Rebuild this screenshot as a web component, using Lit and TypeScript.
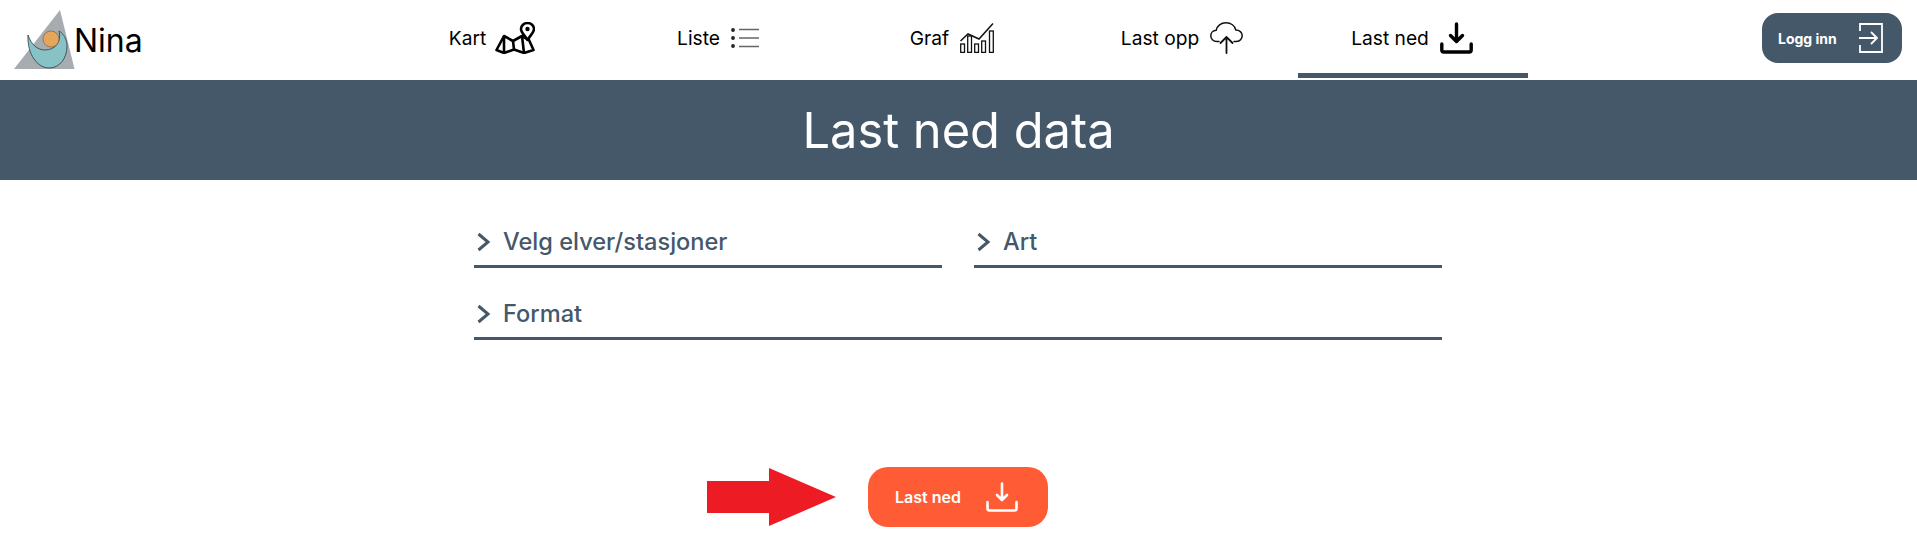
import { LitElement, html, css, svg } from 'lit';
import { customElement } from 'lit/decorators.js';

const icons = {
  kart: svg`<svg class="tuck" width="40" height="32" viewBox="0 0 40 32" fill="none" stroke="#000" stroke-width="2.6" stroke-linejoin="round">
    <path d="M1.500 28 L9 14 L18 19 L27 14 L34 18 L38.500 28 L29 31 L19 27.500 L9 31 Z"/>
    <path d="M9 14 L9 31 M18 19 L19 27.500 M27 14 L29 31"/>
    <path d="M32.500 18 C29.500 13 26 10.500 26 7 A6.500 6 0 0 1 39 7 C39 10.500 35.500 13 32.500 18 Z" fill="#fff"/>
    <circle cx="32.500" cy="7" r="2.200" fill="#000" stroke="none"/></svg>`,
  liste: svg`<svg class="shift" width="28" height="20" viewBox="0 0 28 20" fill="none">
    <circle cx="2" cy="2" r="1.900" fill="#222"/><circle cx="2" cy="10" r="1.900" fill="#222"/><circle cx="2" cy="18" r="1.900" fill="#222"/>
    <path d="M8 1.500H28M8 10H28M8 18.500H28" stroke="#666" stroke-width="1.600"/></svg>`,
  graf: svg`<svg width="34" height="30" viewBox="0 0 34 30" fill="none" stroke="#111" stroke-width="1.300">
    <path d="M0.500 18 L8 11 L19 16 L33 0.500" stroke-width="1.500"/>
    <rect x="0.700" y="21" width="3.800" height="8.400"/><rect x="7.700" y="13" width="3.800" height="16.400"/>
    <rect x="14.700" y="21" width="3.800" height="8.400"/><rect x="21.700" y="18" width="3.800" height="11.400"/>
    <rect x="29.500" y="8" width="3.800" height="21.400"/></svg>`,
  cloud: svg`<svg width="33" height="32" viewBox="0 0 33 32" fill="none" stroke="#111" stroke-width="1.500" stroke-linecap="round" stroke-linejoin="round">
    <path d="M9 19.500 H7 C3 19.500 0.800 16.800 0.800 13.800 C0.800 10.800 3 8.500 6.200 8.300 C7 3.800 11 0.800 16 0.800 C21 0.800 24.800 3.800 25.800 8 C29.500 8 32.200 10.500 32.200 13.800 C32.200 16.800 29.800 19.500 26.500 19.500 H24"/>
    <path d="M16.500 31 V15.500 M10.500 21 L16.500 15 L22.500 21" stroke-width="1.800"/></svg>`,
  download: svg`<svg width="33" height="32" viewBox="0 0 33 32" fill="none" stroke="#000" stroke-width="3.400" stroke-linecap="round" stroke-linejoin="round">
    <path d="M16.500 2 V19.500 M10.500 13.500 L16.500 19.500 L22.500 13.500"/>
    <path d="M1.800 22 V28 Q1.800 30 3.800 30 H29.200 Q31.200 30 31.200 28 V22"/></svg>`,
  login: svg`<svg width="24" height="30" viewBox="0 0 24 30" fill="none" stroke="#fff" stroke-width="1.800">
    <path d="M1 8 V1 H23 V29 H1 V22"/><path d="M0 15 H18 M12 9 L18 15 L12 21"/></svg>`,
  chevron: svg`<svg width="16" height="20" viewBox="0 0 16 20" fill="none" stroke="#45586a" stroke-width="3">
    <path d="M2.500 2 L12 10 L2.500 18"/></svg>`,
};

@customElement('app-root')
export class AppRoot extends LitElement {
  static styles = css`
    :host {
      display: block;
      font-family: Inter, "Liberation Sans", sans-serif;
      color: #000;
      background: #fff;
      height: 547px;
      overflow: hidden;
    }
    .header {
      display: flex;
      height: 80px;
    }
    .brand {
      width: 378px;
      flex: none;
      display: flex;
      align-items: center;
      padding-left: 14px;
      box-sizing: border-box;
      font-size: 32px;
    }
    .brand span {
      margin: 1px 0 0 -1px;
    }
    .nav {
      display: grid;
      grid-template-columns: repeat(5, 230px);
      height: 78px;
    }
    .tab {
      display: flex;
      align-items: center;
      justify-content: center;
      gap: 11px;
      padding-right: 2px;
      font-size: 19.2px;
      font-weight: 400;
      border-bottom: 5px solid transparent;
    }
    .tab span {
      margin-top: 2px;
    }
    .tab svg {
      margin-top: 2px;
    }
    .tab .shift {
      margin-right: 8px;
    }
    .tab .tuck {
      margin-left: -2px;
    }
    .tab.active {
      border-bottom-color: #45586a;
    }
    .login {
      margin: 13px 15px 0 auto;
      width: 140px;
      height: 50px;
      box-sizing: border-box;
      padding: 0 19px 0 16px;
      display: flex;
      align-items: center;
      justify-content: space-between;
      background: #45586a;
      border-radius: 16px;
      color: #fff;
      font-size: 14px;
      font-weight: 700;
    }
    .band {
      height: 100px;
      background: #45586a;
      color: #fff;
      display: flex;
      align-items: center;
      justify-content: center;
      font-size: 48.8px;
      font-weight: 400;
    }
    .form {
      width: 968px;
      margin-left: 474px;
      padding: 47px 0 0;
      display: grid;
      grid-template-columns: 1fr 1fr;
      column-gap: 32px;
      row-gap: 31px;
    }
    .field {
      height: 38px;
      border-bottom: 3px solid #45586a;
      display: flex;
      align-items: flex-start;
      gap: 11px;
      padding-left: 2px;
      color: #45586a;
      font-size: 23.6px;
      font-weight: 500;
      line-height: 29px;
    }
    .field svg {
      margin-top: 5px;
    }
    .field.wide {
      grid-column: 1 / -1;
    }
    .actions {
      display: flex;
      align-items: center;
      padding: 127px 0 0 707px;
      gap: 32px;
    }
    .go {
      width: 180px;
      height: 60px;
      box-sizing: border-box;
      padding: 0 30px 0 27px;
      display: flex;
      align-items: center;
      justify-content: space-between;
      border-radius: 20px;
      background: #ff5c36;
      color: #fff;
      font-size: 16px;
      font-weight: 600;
    }
  `;

  tab(label: string, icon: unknown, active = false) {
    return html`<div class="tab ${active ? 'active' : ''}"><span>${label}</span>${icon}</div>`;
  }

  render() {
    return html`
      <div class="header">
        <div class="brand">
          <svg width="61" height="60" viewBox="0 0 61 60">
            <path d="M46 0 L60.500 59 L0 59 Z" fill="#a7acb0"/>
            <path d="M14 25 C13 45 24 58 35 58 C46 58 53 48 53 36 C53 30 50 24 45 21 C48 32 41 40 31 40 C23 40 17 34 14 25 Z" fill="#86c2c6" stroke="#3c4a4e" stroke-width="0.900"/>
            <circle cx="37" cy="29" r="8" fill="#e5a55a" stroke="#6b5a3c" stroke-width="0.600"/>
          </svg>
          <span>Nina</span>
        </div>
        <nav class="nav">
          ${this.tab('Kart', icons.kart)}
          ${this.tab('Liste', icons.liste)}
          ${this.tab('Graf', icons.graf)}
          ${this.tab('Last opp', icons.cloud)}
          ${this.tab('Last ned', icons.download, true)}
        </nav>
        <div class="login"><span>Logg inn</span>${icons.login}</div>
      </div>
      <div class="band">Last ned data</div>
      <div class="form">
        <div class="field">${icons.chevron}<span>Velg elver/stasjoner</span></div>
        <div class="field">${icons.chevron}<span>Art</span></div>
        <div class="field wide">${icons.chevron}<span>Format</span></div>
      </div>
      <div class="actions">
        <svg width="129" height="58" viewBox="0 0 129 58"><path d="M0 13 H62 V0 L129 29 L62 58 V45 H0 Z" fill="#ed1c24"/></svg>
        <div class="go">
          <span>Last ned</span>
          <svg width="32" height="30" viewBox="0 0 32 30" fill="none" stroke="#fff" stroke-width="2.600" stroke-linecap="round" stroke-linejoin="round">
            <path d="M16 1.500 V18 M11 13 L16 18 L21 13"/>
            <path d="M1.500 20 V26.500 Q1.500 28.500 3.500 28.500 H28.500 Q30.500 28.500 30.500 26.500 V20"/>
          </svg>
        </div>
      </div>
    `;
  }
}
